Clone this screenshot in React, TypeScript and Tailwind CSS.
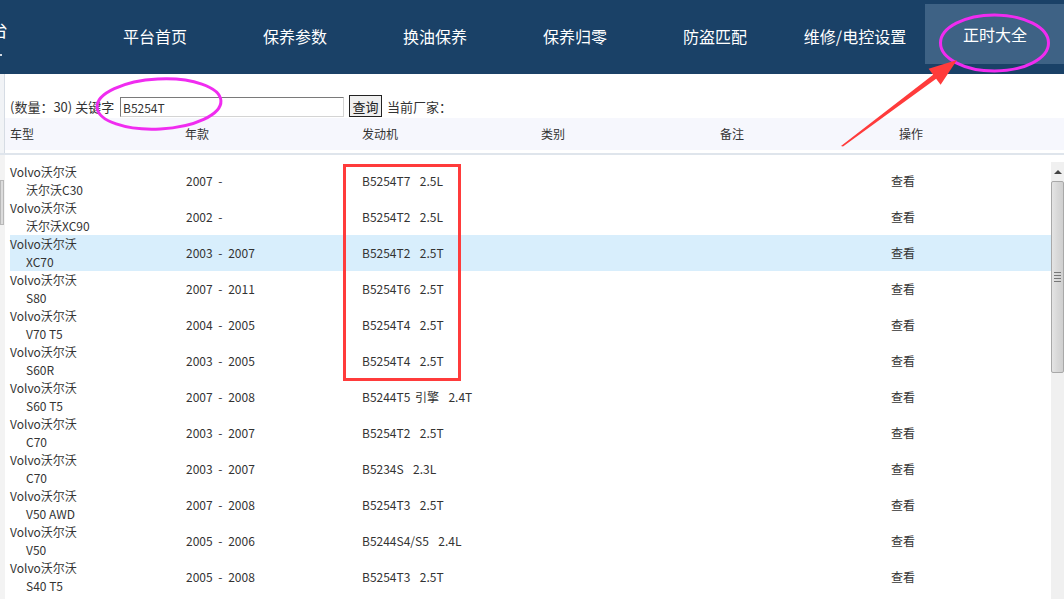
import React from "react";

const navItems = ["平台首页", "保养参数", "换油保养", "保养归零", "防盗匹配", "维修/电控设置", "正时大全"];

interface Row {
  model: string;
  year: string;
  engine: string;
}

const rows: Row[] = [
  { model: "沃尔沃C30", year: "2007 -", engine: "B5254T7  2.5L" },
  { model: "沃尔沃XC90", year: "2002 -", engine: "B5254T2  2.5L" },
  { model: "XC70", year: "2003 - 2007", engine: "B5254T2  2.5T" },
  { model: "S80", year: "2007 - 2011", engine: "B5254T6  2.5T" },
  { model: "V70 T5", year: "2004 - 2005", engine: "B5254T4  2.5T" },
  { model: "S60R", year: "2003 - 2005", engine: "B5254T4  2.5T" },
  { model: "S60 T5", year: "2007 - 2008", engine: "B5244T5 引擎  2.4T" },
  { model: "C70", year: "2003 - 2007", engine: "B5254T2  2.5T" },
  { model: "C70", year: "2003 - 2007", engine: "B5234S  2.3L" },
  { model: "V50 AWD", year: "2007 - 2008", engine: "B5254T3  2.5T" },
  { model: "V50", year: "2005 - 2006", engine: "B5244S4/S5  2.4L" },
  { model: "S40 T5", year: "2005 - 2008", engine: "B5254T3  2.5T" },
];

function Scrollbar() {
  return (
    <div className="w-[13px] shrink-0 mt-[7px] bg-[#f0f0f0] flex flex-col">
      <div className="h-[19px] flex items-center justify-center">
        <div className="w-0 h-0 border-l-[4px] border-r-[4px] border-b-[4px] border-l-transparent border-r-transparent border-b-[#444]" />
      </div>
      <div className="h-[192px] border border-[#a8a8a8] rounded-[2px] bg-gradient-to-r from-[#e4e4e4] via-[#d8d8d8] to-[#cfcfcf] flex flex-col items-center justify-center gap-[2px]">
        <div className="w-[7px] h-[1px] bg-[#777]" />
        <div className="w-[7px] h-[1px] bg-[#777]" />
        <div className="w-[7px] h-[1px] bg-[#777]" />
        <div className="w-[7px] h-[1px] bg-[#777]" />
      </div>
    </div>
  );
}

export default function App() {
  return (
    <div className="relative w-[1064px] h-[599px] overflow-hidden bg-white font-['Noto_Sans_CJK_SC',sans-serif] text-[12px] text-[#333]">
      {/* top nav */}
      <div className="h-[74px] bg-[#1a4167] flex">
        <div className="w-[85px] shrink-0 overflow-hidden pt-[18px]">
          <div className="ml-[-10px] text-[18px] leading-[22px] text-white">台</div>
          <div className="ml-[-2px] mt-[14px] w-[4px] h-[2px] bg-white/80" />
        </div>
        {navItems.map((item, i) =>
          i === navItems.length - 1 ? (
            <div key={item} className="w-[140px] shrink-0 mt-[4px] h-[60px] bg-[#3e6285] flex items-center justify-center text-[16px] text-white">
              {item}
            </div>
          ) : (
            <div key={item} className="w-[140px] shrink-0 flex items-center justify-center text-[16px] text-white pb-[3px]">
              {item}
            </div>
          )
        )}
      </div>

      <div className="flex h-[525px]">
        <div className="w-[5px] shrink-0 flex flex-col">
          <div className="h-[81px] bg-[#f1f3f6] border-r border-[#d6dce4]" />
          <div className="flex-1 bg-[#f3f3f3] pt-[25px]">
            <div className="w-[4px] h-[45px] border border-[#b8b8b8] bg-[#dcdcdc]" />
          </div>
        </div>

        <div className="flex-1 flex flex-col">
          {/* search row */}
          <div className="h-[44px] pt-[21px] pl-[5px] flex items-start">
            <span className="mt-[4px] w-[107px] text-[13px] leading-[16px] whitespace-nowrap">(数量：30) 关键字</span>
            <input
              readOnly
              value="B5254T"
              className="ml-[3px] mt-[2px] w-[224px] h-[20px] border border-t-[#7a7a7a] border-l-[#7a7a7a] border-r-[#d4d4d4] border-b-[#d4d4d4] px-[2px] text-[12px] text-[#333] outline-none"
            />
            <button className="ml-[5px] w-[33px] h-[22px] border border-[#222] bg-[#efefef] text-[13px] text-[#222] leading-none">
              查询
            </button>
            <span className="ml-[5px] mt-[4px] text-[13px] leading-[16px]">当前厂家：</span>
          </div>

          {/* table head */}
          <div className="h-[32px] bg-[#f6f7fd] flex items-center pl-[5px]">
            <div className="w-[175px]">车型</div>
            <div className="w-[177px]">年款</div>
            <div className="w-[179px]">发动机</div>
            <div className="w-[179px]">类别</div>
            <div className="w-[179px]">备注</div>
            <div>操作</div>
          </div>
          <div className="h-[3px]" />
          <div className="h-[2px] bg-[#dfe5ec] ml-[-5px]" />

          {/* table body */}
          <div className="flex-1 flex">
            <div className="flex-1 pl-[5px] pt-[8px]">
              {rows.map((r, i) => (
                <div key={i} className={`h-[36px] flex items-center ${i === 2 ? "bg-[#d8eefc]" : ""}`}>
                  <div className="w-[176px] leading-[18px]">
                    <div>Volvo沃尔沃</div>
                    <div className="pl-[16px]">{r.model}</div>
                  </div>
                  <div className="w-[176px] [word-spacing:3px]">{r.year}</div>
                  <div className="w-[529px] whitespace-pre [word-spacing:2px]">{r.engine}</div>
                  <div>查看</div>
                </div>
              ))}
            </div>
            <Scrollbar />
          </div>
        </div>
      </div>

      {/* annotations drawn over the screenshot */}
      <svg className="absolute inset-0 pointer-events-none" width="1064" height="599" viewBox="0 0 1064 599">
        <ellipse cx="994.5" cy="43" rx="54" ry="28" fill="none" stroke="#f02cf0" strokeWidth="3" />
        <ellipse cx="159" cy="104" rx="62" ry="25" fill="none" stroke="#f02cf0" strokeWidth="3" transform="rotate(-3 159 104)" />
        <rect x="344.5" y="165.5" width="115" height="214" fill="none" stroke="#ff3b3b" strokeWidth="3" />
        <polygon
          points="841,146 843,146.5 936.1,78.8 940.6,84.8 957,60 928.6,68.8 933.1,74.8"
          fill="#ff3b3b"
        />
      </svg>
    </div>
  );
}
